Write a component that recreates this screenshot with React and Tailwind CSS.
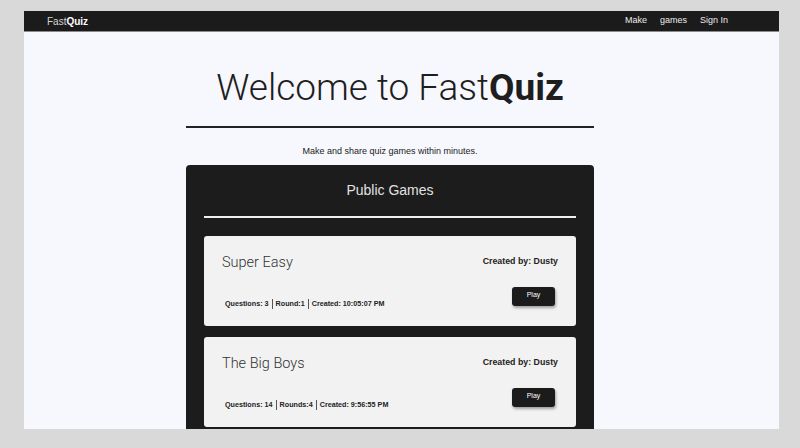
const games = [
  { title: 'Super Easy', author: 'Dusty', questions: 3, rounds: 'Round:1', created: '10:05:07 PM' },
  { title: 'The Big Boys', author: 'Dusty', questions: 14, rounds: 'Rounds:4', created: '9:56:55 PM' },
];

const GameCard = ({ game }) => (
  <div className="h-[90px] shrink-0 rounded-[3px] bg-[#f2f2f2] flex flex-col justify-between px-[18px] pt-[18px] pb-[16px]">
    <div className="flex items-start justify-between">
      <h3 className="text-[14.5px] font-light font-['Roboto',sans-serif] text-[#333] leading-[18px]">{game.title}</h3>
      <span className="text-[8.8px] font-bold text-[#222] leading-[12px] mt-[1px]">Created by: {game.author}</span>
    </div>
    <div className="flex items-end justify-between pl-[3px] pr-[3px]">
      <div className="flex items-center text-[7.2px] font-bold text-[#222] leading-[10px] mb-[1px]">
        <span className="pr-[3px]">Questions: {game.questions}</span>
        <span className="border-l border-[#555] px-[3px]">{game.rounds}</span>
        <span className="border-l border-[#555] pl-[3px]">Created: {game.created}</span>
      </div>
      <button className="w-[43px] h-[19px] mb-[4px] rounded-[3px] bg-[#1b1b1b] text-white text-[7px] pb-[3px] shadow-[1px_2px_3px_rgba(0,0,0,0.35)]">
        Play
      </button>
    </div>
  </div>
);

export default function App() {
  return (
    <div className="w-[800px] h-[448px] bg-[#d9d9d9] pt-[11px] pl-[24px] pr-[21px] font-['Liberation_Sans',Arial,sans-serif]">
      <div className="h-[418px] bg-[#f7f8fd] overflow-hidden flex flex-col">
        <nav className="h-[21px] shrink-0 bg-[#1b1b1b] border-b border-[#8a8a8a] flex items-center justify-between pl-[23px] pr-[51px] text-[9px]">
          <span className="text-[10px] text-[#d4d4d4]">
            Fast<b className="text-white">Quiz</b>
          </span>
          <div className="flex gap-[13px] text-[#ececec]">
            <span>Make</span>
            <span>games</span>
            <span>Sign In</span>
          </div>
        </nav>

        <div className="w-[408px] ml-[162px] flex flex-col items-center">
          <h1 className="mt-[34px] text-[37px] leading-[44px] font-light font-['Roboto',sans-serif] text-[#1e1e1e]">
            Welcome to Fast<b className="font-bold">Quiz</b>
          </h1>
          <div className="w-full h-[2px] bg-[#222] mt-[16px]" />
          <p className="mt-[17px] text-[9px] leading-[12px] text-[#222]">Make and share quiz games within minutes.</p>

          <section className="w-full mt-[8px] bg-[#1c1c1c] rounded-t-[4px] px-[18px] flex flex-col">
            <h2 className="text-center text-[14px] leading-[18px] text-[#e2e2e2] mt-[16px]">Public Games</h2>
            <div className="h-[2px] bg-[#eeeeee] mt-[17px]" />
            <div className="flex flex-col gap-[11px] mt-[18px] pb-[4px]">
              {games.map((g) => (
                <GameCard key={g.title} game={g} />
              ))}
            </div>
          </section>
        </div>
      </div>
    </div>
  );
}
